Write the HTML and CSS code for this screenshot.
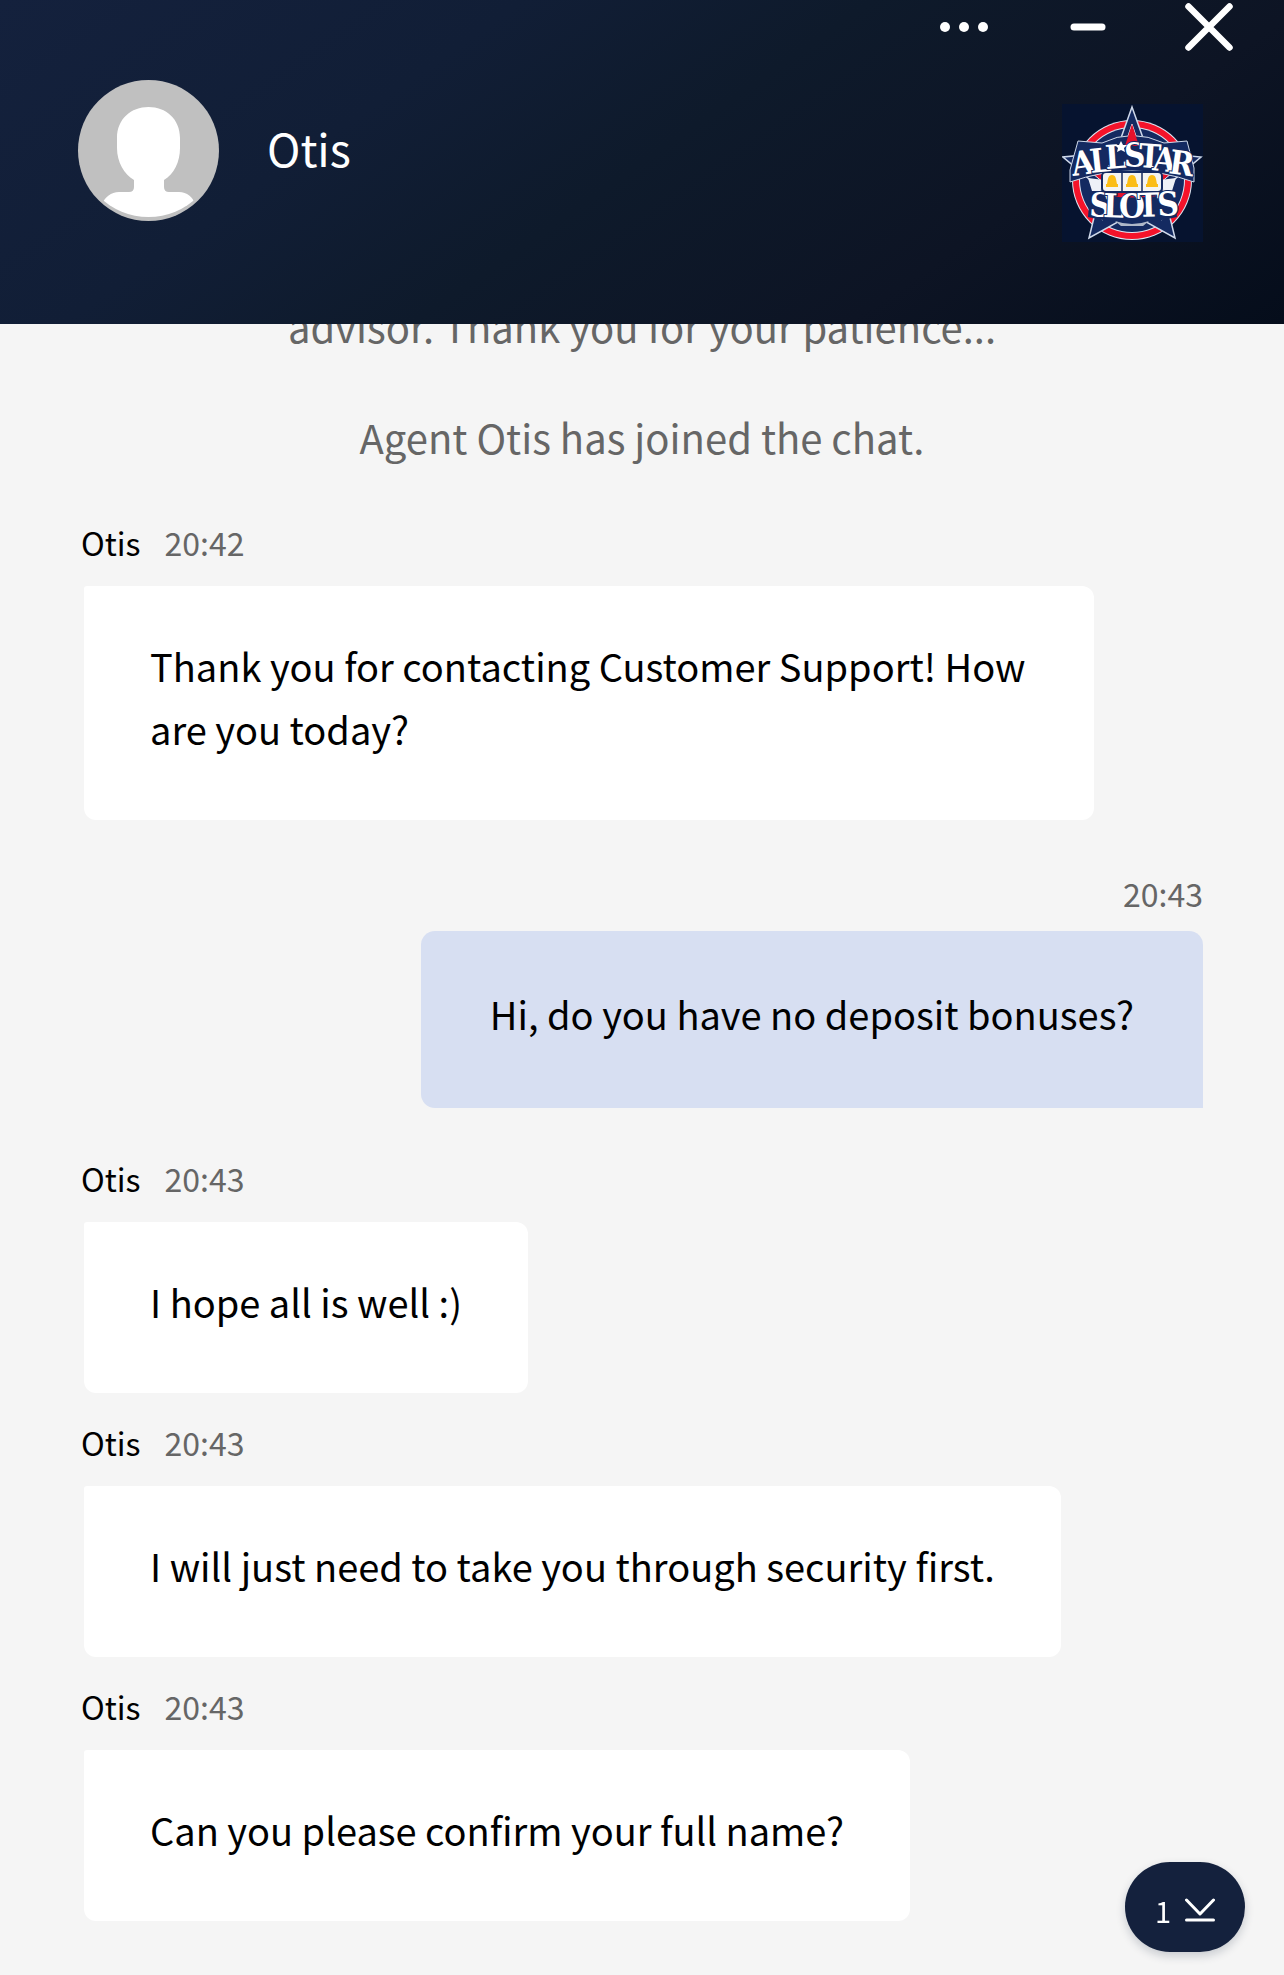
FILE: index.html
```html
<!DOCTYPE html>
<html lang="en">
<head>
    <meta charset="utf-8">
    <meta name="viewport" content="width=device-width, initial-scale=1">
    <title>Chat with Otis</title>
    <link rel="stylesheet" href="styles.css">
</head>
<body>
<div class="chat">
    <header class="chat-header">
        <div class="controls">
            <button type="button" aria-label="More options">
                <svg width="54" height="54" viewBox="0 0 54 54" fill="#fff">
                    <circle cx="8" cy="27" r="5"/>
                    <circle cx="27" cy="27" r="5"/>
                    <circle cx="46" cy="27" r="5"/>
                </svg>
            </button>
            <button type="button" aria-label="Minimize">
                <svg width="36" height="54" viewBox="0 0 36 54">
                    <path d="M4 27H32" stroke="#fff" stroke-width="7" stroke-linecap="round"/>
                </svg>
            </button>
            <button type="button" aria-label="Close">
                <svg width="48" height="54" viewBox="0 0 48 54">
                    <path d="M3.500 6.500L44.500 47.500M44.500 6.500L3.500 47.500" stroke="#fff" stroke-width="6.500" stroke-linecap="round"/>
                </svg>
            </button>
        </div>
        <div class="profile">
            <svg class="avatar" viewBox="0 0 141 141">
                <defs>
                    <clipPath id="face"><circle cx="70.500" cy="67" r="70"/></clipPath>
                </defs>
                <circle cx="70.500" cy="70.500" r="70.500" fill="#c0c0c0"/>
                <path clip-path="url(#face)" fill="#fff" d="M70.500 27C88 27 102 39 102 58V68C102 82 96 94 86 100V107Q86 112 91 112H101C109 112 115 117 117 124V141H24V124C27 117 33 112 41 112H51Q56 112 56 107V100C46 94 39 82 39 68V58C39 39 53 27 70.500 27Z"/>
            </svg>
            <h1 class="agent-name">Otis</h1>
            <svg class="logo" viewBox="22 14 141 138" role="img" aria-label="All Star Slots">
                <rect x="22" y="14" width="141" height="138" fill="#06132f"/>
                <circle cx="92" cy="90" r="60" fill="#dfe6f3"/>
                <circle cx="92" cy="90" r="59" fill="#f5132a"/>
                <circle cx="92" cy="90" r="53" fill="#dfe6f3"/>
                <circle cx="92" cy="90" r="52" fill="#142a61"/>
                <path d="M92 17L108 62L161 67L123 99L135 148L92 124L49 148L61 99L23 67L76 62Z" fill="#142a61" stroke="#cfd9ea" stroke-width="1.500"/>
                <path d="M92 34L104 70L143 74L114 98L122 130L92 116L62 130L70 98L41 74L80 70Z" fill="#e3122b" stroke="#dfe6f3" stroke-width="1"/>
                <path d="M30 92V80L38 51L62 53Q92 38 124 53L147 51L154 78V92Q92 70 30 92Z" fill="#142a61" stroke="#cfd9ea" stroke-width="1"/>
                <path d="M92 34L99 56H85Z" fill="#e3122b"/>
                <path d="M48 88L64 90L60 101H52ZM136 88L120 90L124 101H132Z" fill="#eef1f7"/>
                <path d="M50 103Q92 112 134 103L137 127Q92 138 48 127Z" fill="#142a61"/>
                <path d="M75 131Q92 137 109 131L103 136H81Z" fill="#aeb7c8"/>
                <rect x="62" y="82" width="60" height="20" rx="4" fill="#f4f4f2" stroke="#142a61" stroke-width="2"/>
                <path d="M82 82V102M102 82V102" stroke="#142a61" stroke-width="1.500"/>
                <path id="bell" d="M72 85C68 85 68 89 67 94H66V97H78V94H77C76 89 76 85 72 85Z" fill="#fbbd16"/>
                <use href="#bell" x="20"/>
                <use href="#bell" x="40"/>
                <text class="logo-text" font-size="33" x="33 51 66 84 98 112 128" y="86 83 79 77 77 80 83" rotate="-8 -6 -4 0 4 6 8">ALLSTAR</text>
                <text class="logo-text" font-size="33" x="49 63 79 98 118" y="126 127 128 127 126" rotate="3 2 0 -2 -3">SLOTS</text>
                <path d="M81 51L83 55L87 55L84 58L85 62L81 60L77 62L78 58L75 55L79 55Z" fill="#fff"/>
            </svg>
        </div>
    </header>

    <main class="messages">
        <p class="notice">advisor. Thank you for your patience...</p>
        <p class="notice">Agent Otis has joined the chat.</p>

        <div class="message">
            <div class="meta"><span class="author">Otis</span><time>20:42</time></div>
            <p class="bubble">Thank you for contacting Customer Support! How are you today?</p>
        </div>
        <div class="message visitor">
            <div class="meta"><time>20:43</time></div>
            <p class="bubble">Hi, do you have no deposit bonuses?</p>
        </div>
        <div class="message">
            <div class="meta"><span class="author">Otis</span><time>20:43</time></div>
            <p class="bubble">I hope all is well :)</p>
        </div>
        <div class="message">
            <div class="meta"><span class="author">Otis</span><time>20:43</time></div>
            <p class="bubble">I will just need to take you through security first.</p>
        </div>
        <div class="message">
            <div class="meta"><span class="author">Otis</span><time>20:43</time></div>
            <p class="bubble">Can you please confirm your full name?</p>
        </div>
    </main>

    <button type="button" class="scroll-down" aria-label="1 new message, scroll down">
        <span>1</span>
        <svg width="30" height="24" viewBox="0 0 30 24" fill="none" stroke="#fff" stroke-width="3" stroke-linecap="round" stroke-linejoin="round">
            <path d="M1.500 2L15 16L28.500 2M1.500 22H28.500"/>
        </svg>
    </button>
</div>
</body>
</html>
```

FILE: styles.css
```css
* {
    box-sizing: border-box;
}

body {
    margin: 0;
    background-color: #f5f5f5;
    color: #000;
    font-family: "Noto Sans CJK SC", "Noto Sans", sans-serif;
}

h1, p {
    margin: 0;
    font-weight: 400;
}

button {
    padding: 0;
    border: none;
    background: none;
    color: #fff;
    font-family: inherit;
    cursor: pointer;
}

svg {
    display: block;
    flex: none;
}

.chat {
    display: flex;
    flex-direction: column;
    height: 100vh;
    overflow: hidden;
}

/* header */
.chat-header {
    flex: none;
    min-height: 324px;
    background: linear-gradient(145deg, #14213d 0%, #111e36 30%, #0e1a2b 50%, #0d1424 75%, #050d1b 100%);
    color: #fff;
}

.controls {
    display: flex;
    justify-content: flex-end;
    gap: 79px;
    padding-right: 51px;
}

.profile {
    display: flex;
    align-items: flex-start;
    padding: 26px 81px 0 78px;
}

.avatar {
    width: 141px;
    height: 141px;
}

.agent-name {
    flex: 1;
    margin-left: 48px;
    font-size: 45px;
    line-height: 135px;
}

.logo {
    width: 141px;
    height: 138px;
    margin-top: 24px;
}

.logo-text {
    font-family: "DejaVu Serif Condensed", "DejaVu Serif", serif;
    font-weight: 700;
    fill: #fff;
    stroke: #142a61;
    stroke-width: 2px;
    paint-order: stroke;
}

/* conversation, kept at its newest message */
.messages {
    flex: 1;
    min-height: 0;
    display: flex;
    flex-direction: column;
    justify-content: flex-end;
    padding: 0 81px 54px;
    overflow: hidden;
}

.notice {
    margin-bottom: 51px;
    color: #666;
    font-size: 40px;
    line-height: 60px;
    text-align: center;
}

.message {
    display: flex;
    flex-direction: column;
    align-items: flex-start;
    flex: none;
}

.message + .message {
    margin-top: 25px;
}

.meta {
    display: flex;
    gap: 24px;
    margin-bottom: 20px;
    font-size: 32px;
    line-height: 48px;
}

.meta time {
    color: #666;
}

.bubble {
    max-width: 90%;
    margin-left: 3px;
    padding: 48px 66px 60px;
    border-radius: 3px 12px 12px 12px;
    background-color: #fff;
    font-size: 38px;
    line-height: 63px;
}

.visitor {
    align-items: flex-end;
}

.message + .visitor {
    margin-top: 49px;
}

.visitor + .message {
    margin-top: 46px;
}

.visitor .meta {
    margin-bottom: 14px;
}

.visitor .bubble {
    padding: 51px 69px 63px;
    border-radius: 14px 14px 0 14px;
    background-color: #d7dff2;
}

.scroll-down {
    position: fixed;
    right: 39px;
    bottom: 23px;
    display: flex;
    align-items: center;
    justify-content: center;
    gap: 14px;
    width: 120px;
    height: 90px;
    padding-top: 5px;
    border-radius: 45px;
    background-color: #14213d;
    box-shadow: 0 4px 10px rgba(20, 33, 61, 0.2);
    font-size: 29px;
}
```
